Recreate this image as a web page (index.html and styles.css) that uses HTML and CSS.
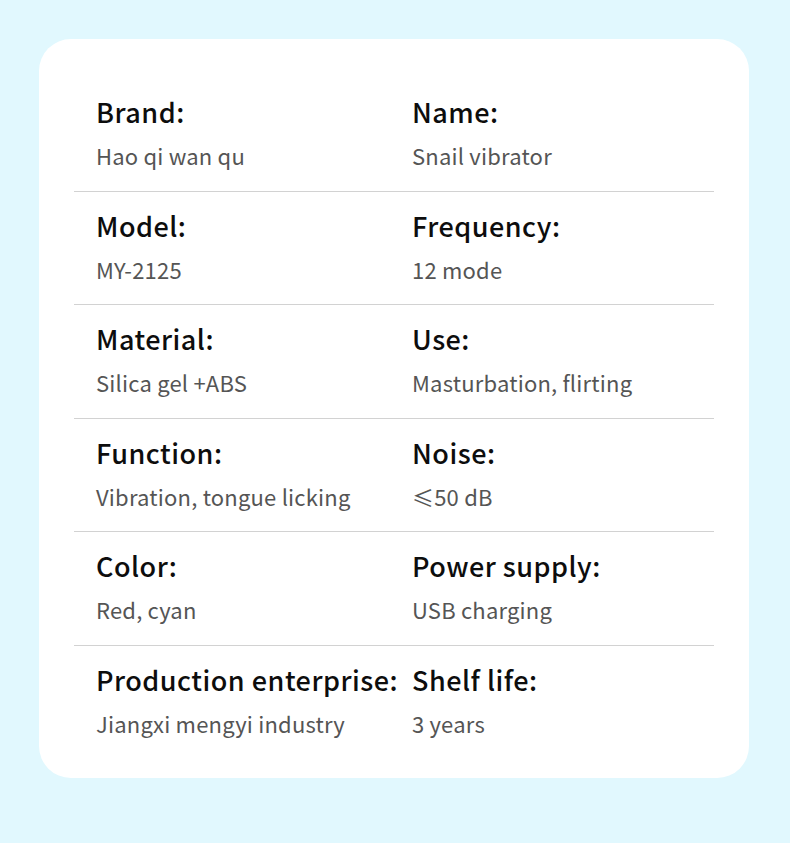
FILE: index.html
```html
<!DOCTYPE html>
<html>
<head>
<meta charset="utf-8">
<link rel="stylesheet" href="styles.css">
</head>
<body>
<div class="card">
  <div class="row">
    <div class="cell"><div class="label">Brand:</div><div class="value">Hao qi wan qu</div></div>
    <div class="cell"><div class="label">Name:</div><div class="value">Snail vibrator</div></div>
  </div>
  <div class="row">
    <div class="cell"><div class="label">Model:</div><div class="value">MY-2125</div></div>
    <div class="cell"><div class="label">Frequency:</div><div class="value">12 mode</div></div>
  </div>
  <div class="row">
    <div class="cell"><div class="label">Material:</div><div class="value">Silica gel +ABS</div></div>
    <div class="cell"><div class="label">Use:</div><div class="value">Masturbation, flirting</div></div>
  </div>
  <div class="row">
    <div class="cell"><div class="label">Function:</div><div class="value">Vibration, tongue licking</div></div>
    <div class="cell"><div class="label">Noise:</div><div class="value">≤50 dB</div></div>
  </div>
  <div class="row">
    <div class="cell"><div class="label">Color:</div><div class="value">Red, cyan</div></div>
    <div class="cell"><div class="label">Power supply:</div><div class="value">USB charging</div></div>
  </div>
  <div class="row last">
    <div class="cell"><div class="label">Production enterprise:</div><div class="value">Jiangxi mengyi industry</div></div>
    <div class="cell"><div class="label">Shelf life:</div><div class="value">3 years</div></div>
  </div>
</div>
</body>
</html>
```
FILE: styles.css
```css
html, body {
  margin: 0;
  padding: 0;
}
body {
  background: #e1f8fe;
  width: 790px;
  height: 843px;
  padding-top: 39px;
  box-sizing: border-box;
  font-family: "Noto Sans CJK SC", "Noto Sans", sans-serif;
}
.card {
  margin-left: 39px;
  width: 710px;
  height: 739px;
  background: #ffffff;
  border-radius: 32px;
  padding: 39px 35px 0 35px;
  box-sizing: border-box;
}
.row {
  display: grid;
  grid-template-columns: 316px 1fr;
  border-bottom: 1px solid #d2d2d2;
  height: 113.5px;
  box-sizing: border-box;
  padding-left: 22px;
  padding-top: 15px;
}
.row.last {
  border-bottom: none;
}
.label {
  font-size: 27px;
  font-weight: 500;
  color: #0d0d0d;
  line-height: 38px;
  letter-spacing: 0.5px;
}
.value {
  font-size: 22px;
  color: #555;
  line-height: 30px;
  margin-top: 9px;
  letter-spacing: 0.2px;
}
```
